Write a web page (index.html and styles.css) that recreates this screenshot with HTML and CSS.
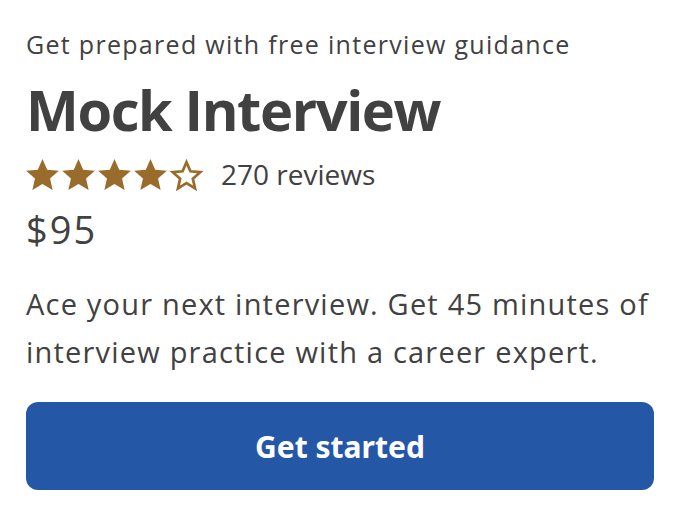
FILE: index.html
```html
<!DOCTYPE html>
<html lang="en">
<head>
<meta charset="utf-8">
<title>Mock Interview</title>
<link rel="stylesheet" href="styles.css">
</head>
<body>
<main class="card">
  <p class="eyebrow">Get prepared with free interview guidance</p>
  <h1 class="title">Mock Interview</h1>
  <div class="rating">
    <div class="stars" aria-label="4.5 out of 5 stars">
      <svg class="star" viewBox="1.2 1.5 21.6 20.5"><path d="M12 1.5l3.1 7.1 7.7.7-5.8 5.1 1.7 7.6L12 18l-6.7 4 1.7-7.6-5.8-5.1 7.7-.7z"/></svg>
      <svg class="star" viewBox="1.2 1.5 21.6 20.5"><path d="M12 1.5l3.1 7.1 7.7.7-5.8 5.1 1.7 7.6L12 18l-6.7 4 1.7-7.6-5.8-5.1 7.7-.7z"/></svg>
      <svg class="star" viewBox="1.2 1.5 21.6 20.5"><path d="M12 1.5l3.1 7.1 7.7.7-5.8 5.1 1.7 7.6L12 18l-6.7 4 1.7-7.6-5.8-5.1 7.7-.7z"/></svg>
      <svg class="star" viewBox="1.2 1.5 21.6 20.5"><path d="M12 1.5l3.1 7.1 7.7.7-5.8 5.1 1.7 7.6L12 18l-6.7 4 1.7-7.6-5.8-5.1 7.7-.7z"/></svg>
      <svg class="star empty" viewBox="1.2 1.5 21.6 20.5"><path d="M12 3.6l2.6 6 6.5.6-4.9 4.3 1.45 6.4L12 17.5l-5.65 3.4 1.45-6.4-4.9-4.3 6.5-.6z"/></svg>
    </div>
    <span class="reviews">270 reviews</span>
  </div>
  <p class="price">$95</p>
  <p class="desc">Ace your next interview. Get 45 minutes of interview practice with a career expert.</p>
  <button class="cta" type="button">Get started</button>
</main>
</body>
</html>
```
FILE: styles.css
```css
* { box-sizing: border-box; }
html, body { margin: 0; padding: 0; background: #fff; }
body {
  font-family: "Open Sans", "Noto Sans", sans-serif;
  color: #414141;
}
.card {
  padding: 28px 34px 0 26px;
  display: flex;
  flex-direction: column;
}
.eyebrow {
  margin: 0;
  font-size: 25px;
  line-height: 32px;
  letter-spacing: 1.3px;
}
.title {
  margin: 17px 0 0;
  font-size: 56px;
  line-height: 64px;
  font-weight: 700;
  letter-spacing: -1.4px;
}
.rating {
  display: flex;
  align-items: center;
  gap: 18px;
  margin-top: 16px;
  height: 34px;
}
.stars { display: flex; gap: 3px; }
.star { width: 33px; height: 31px; fill: #9a6c2b; overflow: visible; }
.star.empty { fill: #fff; stroke: #9a6c2b; stroke-width: 1.8; stroke-linejoin: miter; }
.reviews { font-size: 28px; line-height: 32px; }
.price {
  margin: 16px 0 0;
  font-size: 38px;
  line-height: 44px;
  letter-spacing: 2px;
}
.desc {
  margin: 29px 0 0;
  font-size: 29px;
  line-height: 48px;
  letter-spacing: 1.2px;
}
.cta {
  margin-top: 26px;
  height: 88px;
  border: 0;
  border-radius: 12px;
  background: #2557a7;
  color: #fff;
  font-family: "Noto Sans", "Open Sans", sans-serif;
  font-size: 30px;
  font-weight: 700;
  cursor: pointer;
}
```
